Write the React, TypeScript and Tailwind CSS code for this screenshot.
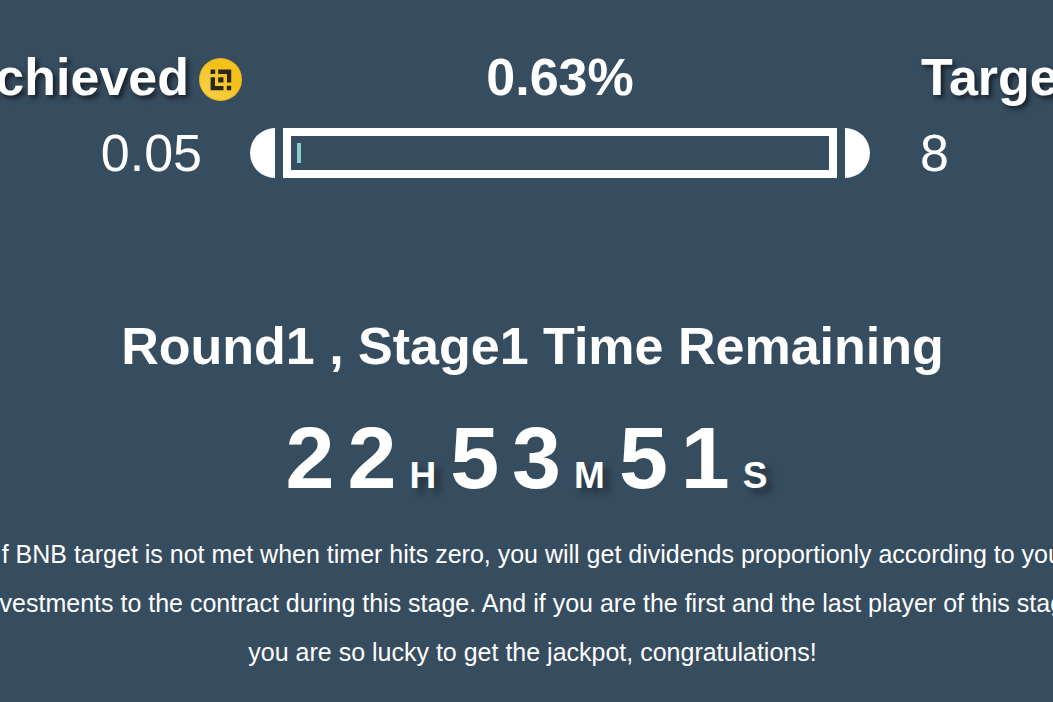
import React from "react";

const headingShadow = "[text-shadow:3px_3px_5px_rgba(0,0,0,0.6)]";
const unitShadow = "[text-shadow:6px_6px_6px_rgba(0,0,0,0.35)]";

function Coin() {
  return (
    <svg viewBox="0 0 43 43" className="mt-1 size-[43px] shrink-0" aria-label="BNB" role="img">
      <defs>
        <linearGradient id="coin" x1="0" y1="1" x2="1" y2="0">
          <stop offset="0" stopColor="#f6d24a" />
          <stop offset="0.45" stopColor="#f5c832" />
          <stop offset="0.6" stopColor="#f3c01a" />
          <stop offset="1" stopColor="#f6c522" />
        </linearGradient>
      </defs>
      <circle cx="21.5" cy="21.5" r="21.5" fill="#f0bb18" />
      <circle cx="21.5" cy="21.5" r="20.3" fill="url(#coin)" />
      <path
        fill="#2a261c"
        d="M11.6 11.6h4.6v4.4h-4.6zM19.2 11.6h13v12.9h-4.2v-8.5h-8.8zM19.2 19.2h5.2v5.2h-5.2zM11.6 19.2h4.4v8.7h8.5v4.3h-12.9zM27.8 27.8h4.4v4.4h-4.4z"
      />
    </svg>
  );
}

function TimePart({ value, unit }: { value: string; unit: string }) {
  return (
    <div className="flex items-baseline gap-[13px]">
      {value.split("").map((digit, i) => (
        <span key={i} className="text-[88px] leading-[100px]">
          {digit}
        </span>
      ))}
      <span className={`text-[37px] leading-10 ${unitShadow}`}>{unit}</span>
    </div>
  );
}

export default function App() {
  const percent = 0.63;
  return (
    <main className="min-h-screen overflow-hidden bg-[#364c5f] pt-[47px] font-['Liberation_Sans',Arial,sans-serif] text-white">
      <section className="grid grid-cols-[250px_1fr_183px] text-[52px] leading-[60px]">
        <h2 className={`flex items-center justify-end gap-2.5 pr-2 font-bold whitespace-nowrap ${headingShadow}`}>
          Achieved
          <Coin />
        </h2>
        <p className="text-center font-bold">{percent}%</p>
        <h2 className={`flex items-center gap-2.5 pl-[51px] font-bold whitespace-nowrap ${headingShadow}`}>
          Target
          <Coin />
        </h2>

        <p className="mt-4 pr-12 text-right">0.05</p>
        <div className="mt-[21px] flex h-[50px] gap-2">
          <div className="w-[25px] rounded-l-full bg-white" />
          <div className="flex-1 border-8 border-white px-1.5 py-[7px]">
            <div className="h-5 bg-[#85d1c9]" style={{ width: `${percent}%`, minWidth: 4 }} />
          </div>
          <div className="w-[25px] rounded-r-full bg-white" />
        </div>
        <p className="mt-4 pl-[50px]">8</p>
      </section>

      <section className="-mr-12 -ml-9 pt-[133px] text-center">
        <h1 className="text-[52px] leading-[60px] font-bold">Round1 , Stage1 Time Remaining</h1>
        <div className="mt-8 flex justify-center gap-3.5 pr-3 font-bold">
          <TimePart value="22" unit="H" />
          <TimePart value="53" unit="M" />
          <TimePart value="51" unit="S" />
        </div>
        <p className="mt-[22px] text-[25px] leading-[49px] whitespace-nowrap">
          If BNB target is not met when timer hits zero, you will get dividends proportionly according to your
          <br />
          investments to the contract during this stage. And if you are the first and the last player of this stage,
          <br />
          you are so lucky to get the jackpot, congratulations!
        </p>
      </section>
    </main>
  );
}
